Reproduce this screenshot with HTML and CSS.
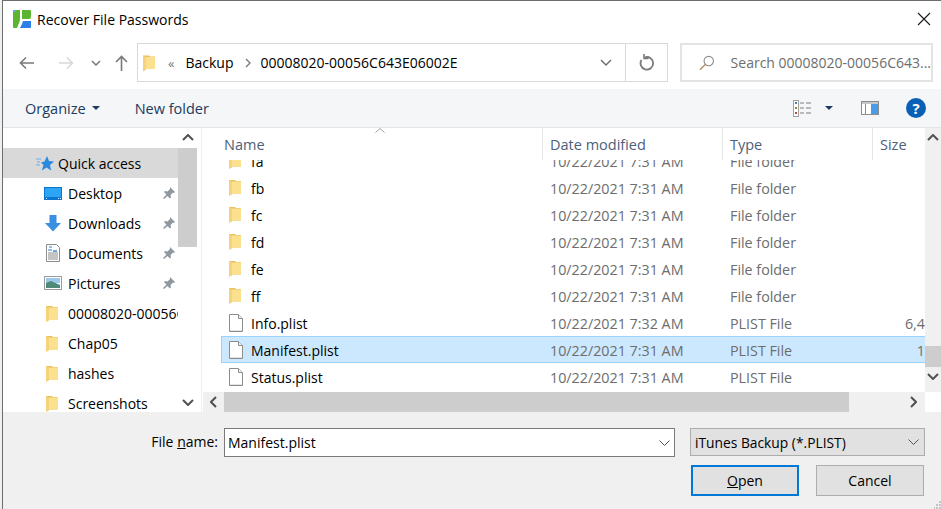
FILE: index.html
```html
<!DOCTYPE html>
<html lang="en">
<head>
    <meta charset="UTF-8">
    <title>Recover File Passwords</title>
    <link rel="stylesheet" href="styles.css">
</head>
<body>
    <svg class="defs" width="0" height="0">
        <symbol id="folder" viewBox="0 0 12 17">
            <path d="M0 1h6l1 1h5v12.500H0z" fill="#e9bf5c"/>
            <path d="M3 2.500h9v12H3z" fill="#fbe08e"/>
            <path d="M0 1l3 1.500v13L0 17z" fill="#f5d27c"/>
        </symbol>
        <symbol id="file" viewBox="0 0 14 18">
            <path d="M.5.500h9l4 4v13H.500z" fill="#fff" stroke="#8c8c8c"/>
            <path d="M9.500.5v4h4" fill="#f0f0f0" stroke="#8c8c8c"/>
            <path d="M1 16h12v1H1z" fill="#e4e4e4"/>
        </symbol>
        <symbol id="pin" viewBox="0 0 14 14">
            <path d="M8 1l5 5-1 1-1-.5-2.500 2.500.5 2.500-1 1-2.500-2.500L2 13l-1-1 3.500-3.500L2 6l1-1 2.500.5L8 3z" fill="#8f979f"/>
        </symbol>
    </svg>

    <div class="dialog">
        <div class="titlebar">
            <svg class="app-logo" width="18" height="18" viewBox="0 0 18 18">
                <path d="M1 0h6v9q0 2-1 4l-2 5H1q-1 0-1-1V1q0-1 1-1z" fill="#5cb531"/>
                <path d="M0 1q0-1 1-1h2v2H0z" fill="#5aa8e8"/>
                <path d="M9 0h8q1 0 1 1v6q0 2-2 2H9z" fill="#5cb531"/>
                <path d="M10 11h8v6q0 1-1 1H7l2-4z" fill="#2f7fe8"/>
            </svg>
            <span class="app-title">Recover File Passwords</span>
            <svg class="close-icon" width="14" height="14" viewBox="0 0 14 14">
                <path d="M1 1l12 12M13 1L1 13" stroke="#1a1a1a" stroke-width="1.100" fill="none"/>
            </svg>
        </div>

        <div class="navbar">
            <div class="nav-buttons">
                <svg class="nav-back" width="16" height="14" viewBox="0 0 16 14"><path d="M15 7H2M7 1.500L1.500 7 7 12.500" stroke="#7a7a7a" stroke-width="1.600" fill="none"/></svg>
                <svg class="nav-forward" width="16" height="14" viewBox="0 0 16 14"><path d="M1 7h13M9 1.500L14.500 7 9 12.500" stroke="#d8d8d8" stroke-width="1.600" fill="none"/></svg>
                <svg class="nav-recent" width="10" height="6" viewBox="0 0 10 6"><path d="M1 1l4 4 4-4" stroke="#7a7a7a" stroke-width="1.500" fill="none"/></svg>
                <svg class="nav-up" width="13" height="16" viewBox="0 0 13 16"><path d="M6.500 16V2M1 7l5.500-5.500L12 7" stroke="#7a7a7a" stroke-width="1.600" fill="none"/></svg>
            </div>
            <div class="address">
                <svg class="folder-icon" width="12" height="18"><use href="#folder"/></svg>
                <span class="crumb-more">«</span>
                <span class="crumb">Backup</span>
                <svg class="crumb-sep" width="6" height="10" viewBox="0 0 6 10"><path d="M1 1l4 4-4 4" stroke="#7a7a7a" stroke-width="1.400" fill="none"/></svg>
                <span class="crumb crumb-last">00008020-00056C643E06002E</span>
                <svg class="address-drop" width="12" height="7" viewBox="0 0 12 7"><path d="M1 1l5 5 5-5" stroke="#6a6a6a" stroke-width="1.400" fill="none"/></svg>
            </div>
            <div class="refresh">
                <svg width="16" height="17" viewBox="0 0 16 17"><path d="M6 3.300A6.300 6.300 0 1 1 2.500 6" stroke="#7a7a7a" stroke-width="1.800" fill="none"/><path d="M5 0v4.500h4.500" stroke="#7a7a7a" stroke-width="1.600" fill="none"/></svg>
            </div>
            <div class="search">
                <svg width="16" height="16" viewBox="0 0 16 16"><circle cx="10" cy="6" r="4.800" stroke="#8a8a8a" stroke-width="1.100" fill="none"/><path d="M6.500 9.500L1 15" stroke="#b08a60" stroke-width="1.300"/></svg>
                <span class="search-text">Search 00008020-00056C643...</span>
            </div>
        </div>

        <div class="toolbar">
            <span class="tool-link">Organize</span>
            <span class="caret"></span>
            <span class="tool-link new-folder">New folder</span>
            <div class="tool-right">
                <svg class="view-icon" width="18" height="17" viewBox="0 0 18 17">
                    <rect x=".5" y=".5" width="5" height="16" fill="#fff" stroke="#a0a0a0"/>
                    <path d="M2 2h2v2H2z" fill="#4a80b8"/><path d="M2 7h2v2H2z" fill="#8a8a30"/><path d="M2 12h2v2H2z" fill="#b84a30"/>
                    <path d="M7 3h4M13 3h5M7 8h4M13 8h5M7 13h4M13 13h5" stroke="#7f7f7f"/>
                </svg>
                <span class="caret view-caret"></span>
                <svg class="pane-icon" width="18" height="14" viewBox="0 0 18 14">
                    <rect x=".5" y=".5" width="17" height="13" fill="#fff" stroke="#8c8c8c"/>
                    <rect x="1" y="1" width="16" height="2" fill="#c8c8c8"/>
                    <rect x="4" y="3" width="1" height="10" fill="#8c8c8c"/>
                    <rect x="10" y="3" width="7" height="10" fill="#4a9be8"/>
                </svg>
                <span class="help">?</span>
            </div>
        </div>

        <div class="browser">
            <div class="sidebar">
                <div class="side-list">
                    <div class="side-item selected">
                        <svg class="side-icon" width="18" height="16" viewBox="0 0 18 16"><path d="M11 1l2 5 5 .5-4 3.500 1.200 5.500-4.700-3-4.700 3L7.500 10 5 7.500l3.500-1z" fill="#2b8ae0"/><path d="M0 4h5M1 7h3M0 10h4" stroke="#6bb0ee"/></svg>
                        <span class="side-label">Quick access</span>
                    </div>
                    <div class="side-item">
                        <svg class="side-icon" width="18" height="13" viewBox="0 0 18 13"><rect width="18" height="13" fill="#0a76d0"/><rect x="1" y="1" width="16" height="9" fill="#2ea4f4"/><path d="M2 11.500h1M14 11.500h1M16 11.500h1" stroke="#fff"/></svg>
                        <span class="side-label">Desktop</span>
                        <svg class="pin" width="14" height="14"><use href="#pin"/></svg>
                    </div>
                    <div class="side-item">
                        <svg class="side-icon" width="18" height="17" viewBox="0 0 18 17"><path d="M5.500 0h7v8H17l-8 8.500L1 8h4.500z" fill="#3a8fe0"/></svg>
                        <span class="side-label">Downloads</span>
                        <svg class="pin" width="14" height="14"><use href="#pin"/></svg>
                    </div>
                    <div class="side-item">
                        <svg class="side-icon" width="18" height="18" viewBox="0 0 18 18"><path d="M2.500.5h10l3 3v14h-13z" fill="#fff" stroke="#8c8c8c"/><path d="M5 3h3M4 6h4" stroke="#2b7fd0"/><path d="M9 6h4v2H9z" fill="#6aa8e0"/><path d="M4 9h10M4 11h10M4 13h10M4 15h10" stroke="#8a8a8a"/></svg>
                        <span class="side-label">Documents</span>
                        <svg class="pin" width="14" height="14"><use href="#pin"/></svg>
                    </div>
                    <div class="side-item">
                        <svg class="side-icon" width="18" height="14" viewBox="0 0 18 14"><rect x=".5" y=".5" width="17" height="13" fill="#fff" stroke="#9a9a9a"/><rect x="2" y="2" width="14" height="5" fill="#9cc8ec"/><path d="M2 7l5-2 9 4v3H2z" fill="#4f8a78"/></svg>
                        <span class="side-label">Pictures</span>
                        <svg class="pin" width="14" height="14"><use href="#pin"/></svg>
                    </div>
                    <div class="side-item">
                        <svg class="side-icon side-folder" width="12" height="17"><use href="#folder"/></svg>
                        <span class="side-label">00008020-00056C643E06002E</span>
                    </div>
                    <div class="side-item">
                        <svg class="side-icon side-folder" width="12" height="17"><use href="#folder"/></svg>
                        <span class="side-label">Chap05</span>
                    </div>
                    <div class="side-item">
                        <svg class="side-icon side-folder" width="12" height="17"><use href="#folder"/></svg>
                        <span class="side-label">hashes</span>
                    </div>
                    <div class="side-item">
                        <svg class="side-icon side-folder" width="12" height="17"><use href="#folder"/></svg>
                        <span class="side-label">Screenshots</span>
                    </div>
                </div>
                <div class="vscroll side-scroll">
                    <svg class="arrow" width="12" height="7" viewBox="0 0 12 7"><path d="M1 6l5-5 5 5" stroke="#505050" stroke-width="2" fill="none"/></svg>
                    <div class="side-thumb"></div>
                    <svg class="arrow arrow-end" width="12" height="7" viewBox="0 0 12 7"><path d="M1 1l5 5 5-5" stroke="#505050" stroke-width="2" fill="none"/></svg>
                </div>
            </div>

            <div class="files">
                <div class="files-main">
                    <div class="file-header">
                        <div class="col col-name">Name</div>
                        <div class="col col-date">Date modified</div>
                        <div class="col col-type">Type</div>
                        <div class="col col-size">Size</div>
                        <svg class="sort-arrow" width="10" height="5" viewBox="0 0 10 5"><path d="M.5 4.500L5 .5l4.500 4" stroke="#a0a0a0" fill="none"/></svg>
                    </div>
                    <div class="file-rows" id="rows"></div>
                    <div class="hscroll">
                        <svg class="h-arrow" width="7" height="12" viewBox="0 0 7 12"><path d="M6 1L1 6l5 5" stroke="#505050" stroke-width="2" fill="none"/></svg>
                        <div class="h-thumb"></div>
                        <svg class="h-arrow h-arrow-end" width="7" height="12" viewBox="0 0 7 12"><path d="M1 1l5 5-5 5" stroke="#505050" stroke-width="2" fill="none"/></svg>
                    </div>
                </div>
                <div class="list-scroll">
                    <div class="vscroll">
                        <svg class="arrow" width="12" height="7" viewBox="0 0 12 7"><path d="M1 6l5-5 5 5" stroke="#505050" stroke-width="2" fill="none"/></svg>
                        <div class="list-thumb"></div>
                        <svg class="arrow list-arrow-end" width="12" height="7" viewBox="0 0 12 7"><path d="M1 1l5 5 5-5" stroke="#505050" stroke-width="2" fill="none"/></svg>
                    </div>
                    <div class="scroll-corner"></div>
                </div>
            </div>
        </div>

        <div class="footer">
            <div class="footer-row">
                <label class="name-label">File <u>n</u>ame:</label>
                <div class="name-input">
                    <span>Manifest.plist</span>
                    <svg width="11" height="6" viewBox="0 0 11 6"><path d="M.5.500l5 5 5-5" stroke="#555" fill="none"/></svg>
                </div>
                <div class="type-select">
                    <span class="type-text">iTunes Backup (*.PLIST)</span>
                    <svg width="11" height="6" viewBox="0 0 11 6"><path d="M.5.500l5 5 5-5" stroke="#555" fill="none"/></svg>
                </div>
            </div>
            <div class="button-row">
                <button class="btn btn-default"><u>O</u>pen</button>
                <button class="btn">Cancel</button>
            </div>
            <svg class="grip" width="7" height="9" viewBox="0 0 7 9"><path d="M5 1h2v2H5zM2 4h2v2H2zM5 4h2v2H5zM0 7h1v2H0zM2 7h2v2H2zM5 7h2v2H5z" fill="#c4c4c4"/></svg>
        </div>
    </div>

    <script>
        const files = [
            ['fa', '10/22/2021 7:31 AM', 'File folder', ''],
            ['fb', '10/22/2021 7:31 AM', 'File folder', ''],
            ['fc', '10/22/2021 7:31 AM', 'File folder', ''],
            ['fd', '10/22/2021 7:31 AM', 'File folder', ''],
            ['fe', '10/22/2021 7:31 AM', 'File folder', ''],
            ['ff', '10/22/2021 7:31 AM', 'File folder', ''],
            ['Info.plist', '10/22/2021 7:32 AM', 'PLIST File', '6,4'],
            ['Manifest.plist', '10/22/2021 7:31 AM', 'PLIST File', '1'],
            ['Status.plist', '10/22/2021 7:31 AM', 'PLIST File', '']
        ];

        let rowsHTML = '';
        files.forEach(file => {
            const isFolder = file[2] === 'File folder';
            const icon = isFolder
                ? '<svg class="row-icon folder-row" width="12" height="17"><use href="#folder"/></svg>'
                : '<svg class="row-icon" width="14" height="18"><use href="#file"/></svg>';
            const selected = file[0] === 'Manifest.plist' ? ' selected' : '';
            rowsHTML += `<div class="file-row${selected}">
                <div class="cell cell-name">${icon}<span class="row-name">${file[0]}</span></div>
                <div class="cell cell-date">${file[1]}</div>
                <div class="cell cell-type">${file[2]}</div>
                <div class="cell cell-size">${file[3]}</div>
            </div>`;
        });
        document.getElementById('rows').innerHTML = rowsHTML;
    </script>
</body>
</html>
```

FILE: styles.css
```css
* {
    box-sizing: border-box;
}
body {
    margin: 0;
    width: 941px;
    height: 509px;
    overflow: hidden;
    font-family: 'Open Sans', 'Noto Sans', sans-serif;
    font-size: 14px;
    color: #000;
    background-color: #f0f0f0;
}
.defs {
    position: absolute;
}
.dialog {
    display: flex;
    flex-direction: column;
    height: 509px;
    margin-left: 2px;
    background-color: white;
    border-top: 1px solid #6d6d6d;
    border-left: 1px solid #6d6d6d;
}

/* title bar */
.titlebar {
    display: flex;
    align-items: center;
    height: 38px;
    padding: 0 10px 2px;
}
.app-logo {
    margin-right: 6px;
}
.app-title {
    font-size: 14px;
    flex: 1;
}

/* back / forward / address / search */
.navbar {
    display: flex;
    align-items: center;
    height: 50px;
    padding-top: 4px;
    padding-bottom: 7px;
}
.nav-buttons {
    display: flex;
    align-items: center;
    width: 134px;
    padding-left: 16px;
}
.nav-forward {
    margin-left: 23px;
}
.nav-recent {
    margin-left: 17px;
}
.nav-up {
    margin-left: 14px;
}
.address {
    display: flex;
    align-items: center;
    width: 488px;
    height: 39px;
    padding-left: 5px;
    border: 1px solid #d9d9d9;
    border-right: none;
}
.folder-icon {
    margin-right: 2px;
}
.crumb-more {
    margin-left: 11px;
    color: #777;
    font-size: 13px;
}
.crumb {
    margin-left: 11px;
    white-space: nowrap;
}
.crumb-sep {
    margin-left: 11px;
}
.crumb-last {
    flex: 1;
    margin-left: 10px;
}
.address-drop {
    margin-right: 13px;
}
.refresh {
    display: flex;
    align-items: center;
    justify-content: center;
    width: 43px;
    height: 39px;
    border: 1px solid #d9d9d9;
}
.search {
    display: flex;
    align-items: center;
    width: 253px;
    height: 39px;
    margin-left: 12px;
    padding-left: 17px;
    border: 2px solid #e3e3e3;
    white-space: nowrap;
    overflow: hidden;
}
.search-text {
    margin-left: 16px;
    color: #6d6d6d;
}

/* organize bar */
.toolbar {
    display: flex;
    align-items: center;
    height: 39px;
    padding-left: 22px;
    padding-right: 15px;
    background-color: #f5f6f7;
    border-bottom: 1px solid #e5e5e5;
}
.tool-link {
    color: #1d3a5f;
    font-size: 14.500px;
}
.caret {
    width: 0;
    height: 0;
    margin-left: 6px;
    border-left: 4px solid transparent;
    border-right: 4px solid transparent;
    border-top: 4px solid #1d3a5f;
}
.new-folder {
    margin-left: 35px;
}
.tool-right {
    display: flex;
    align-items: center;
    margin-left: auto;
}
.view-caret {
    margin-left: 14px;
}
.pane-icon {
    margin-left: 28px;
}
.help {
    display: flex;
    align-items: center;
    justify-content: center;
    width: 20px;
    height: 20px;
    margin-left: 27px;
    border-radius: 50%;
    background-color: #0a60b4;
    color: white;
    font-weight: 700;
    font-size: 15px;
}

/* tree + list */
.browser {
    display: flex;
    height: 284px;
}
.sidebar {
    display: flex;
    width: 194px;
    height: 284px;
    flex-shrink: 0;
}
.side-list {
    width: 175px;
    padding-top: 20px;
    overflow: hidden;
}
.side-item {
    display: flex;
    align-items: center;
    height: 30px;
    padding-left: 41px;
    white-space: nowrap;
}
.side-item.selected {
    background-color: #d9d9d9;
    padding-left: 33px;
}
.side-item.selected .side-icon {
    margin-right: 4px;
}
.side-icon {
    flex-shrink: 0;
    margin-right: 6px;
}
.side-folder {
    margin-left: 2px;
    margin-right: 10px;
}
.side-label {
    flex: 1;
    overflow: hidden;
}
.pin {
    flex-shrink: 0;
    margin-left: 4px;
    margin-right: 2px;
}
.vscroll {
    display: flex;
    flex-direction: column;
    align-items: center;
    background-color: #f0f0f0;
    padding-top: 6px;
}
.side-scroll {
    width: 19px;
    height: 284px;
    background-color: #fff;
}
.side-thumb {
    width: 100%;
    height: 99px;
    margin-top: 7px;
    background-color: #cdcdcd;
}
.arrow-end {
    margin-top: auto;
    margin-bottom: 6px;
}

.files {
    display: flex;
    flex: 1;
    min-width: 0;
    margin-left: 4px;
    border-left: 1px solid #f0f0f0;
}
.files-main {
    display: flex;
    flex-direction: column;
    width: 723px;
    min-width: 0;
}
.file-header {
    display: flex;
    flex-shrink: 0;
    position: relative;
    height: 32px;
    background-color: white;
}
.col {
    padding-left: 7px;
    padding-top: 7px;
    font-size: 14.500px;
    color: #4c607a;
    border-right: 1px solid #e5e5e5;
    height: 32px;
}
.col-name {
    width: 341px;
    padding-left: 22px;
}
.col-date, .cell-date {
    width: 180px;
}
.col-type, .cell-type {
    width: 150px;
}
.col-size, .cell-size {
    width: 52px;
}
.col-size {
    border-right: none;
}
.sort-arrow {
    position: absolute;
    left: 173px;
    top: 0;
}
.file-rows {
    flex: 1;
    overflow: hidden;
}
.file-row {
    display: flex;
    align-items: center;
    height: 27px;
    margin-left: 20px;
    white-space: nowrap;
}
.file-row:first-child {
    margin-top: -13px;
}
.file-row.selected {
    background-color: #cce8ff;
    border: 1px solid #99d1ff;
    border-right: none;
    margin-left: 19px;
}
.cell {
    overflow: hidden;
    padding-top: 2px;
    font-size: 14.300px;
    color: #6d6d6d;
}
.cell-name {
    display: flex;
    align-items: center;
    width: 321px;
    padding-top: 0;
    padding-left: 7px;
    font-size: 14px;
    color: #000;
}
.row-name {
    padding-top: 2px;
}
.row-icon {
    margin-right: 8px;
    flex-shrink: 0;
}
.folder-row {
    margin-right: 10px;
}
.cell-date {
    padding-left: 7px;
}
.cell-type {
    padding-left: 7px;
}
.cell-size {
    text-align: right;
}
.hscroll {
    display: flex;
    align-items: center;
    flex-shrink: 0;
    height: 20px;
    margin-left: 1px;
    background-color: #f0f0f0;
}
.h-arrow {
    flex-shrink: 0;
    margin-left: 7px;
}
.h-thumb {
    width: 625px;
    height: 100%;
    margin-left: 7px;
    background-color: #cdcdcd;
}
.h-arrow-end {
    margin-left: auto;
    margin-right: 8px;
}
.list-scroll {
    display: flex;
    flex-direction: column;
    width: 16px;
}
.list-scroll .vscroll {
    flex: 1;
}
.list-thumb {
    width: 100%;
    height: 21px;
    margin-top: 205px;
    background-color: #cdcdcd;
}
.list-arrow-end {
    margin-top: 6px;
}
.scroll-corner {
    height: 20px;
    background-color: white;
}

/* file name, type, buttons */
.footer {
    position: relative;
    flex: 1;
    padding-top: 16px;
    background-color: #f0f0f0;
}
.footer-row {
    display: flex;
    align-items: flex-start;
}
.name-label {
    width: 218px;
    padding-top: 4px;
    padding-right: 3px;
    text-align: right;
}
.name-input {
    display: flex;
    align-items: center;
    justify-content: space-between;
    width: 451px;
    height: 29px;
    margin-left: 3px;
    padding: 0 4px 0 3px;
    background-color: white;
    border: 1px solid #7a7a7a;
}
.type-select {
    display: flex;
    align-items: center;
    justify-content: space-between;
    width: 235px;
    height: 28px;
    margin-left: 15px;
    padding: 0 5px 0 4px;
    background-color: #e1e1e1;
    border: 1px solid #adadad;
}
.type-text {
    font-size: 13.800px;
}
.button-row {
    display: flex;
    margin-top: 8px;
    margin-left: 688px;
    gap: 17px;
}
.btn {
    width: 108px;
    height: 31px;
    padding: 0;
    font-family: inherit;
    font-size: 14px;
    background-color: #e1e1e1;
    border: 1px solid #adadad;
}
.btn-default {
    border: 2px solid #0078d7;
}
.grip {
    position: absolute;
    right: 0;
    bottom: 0;
}
```
